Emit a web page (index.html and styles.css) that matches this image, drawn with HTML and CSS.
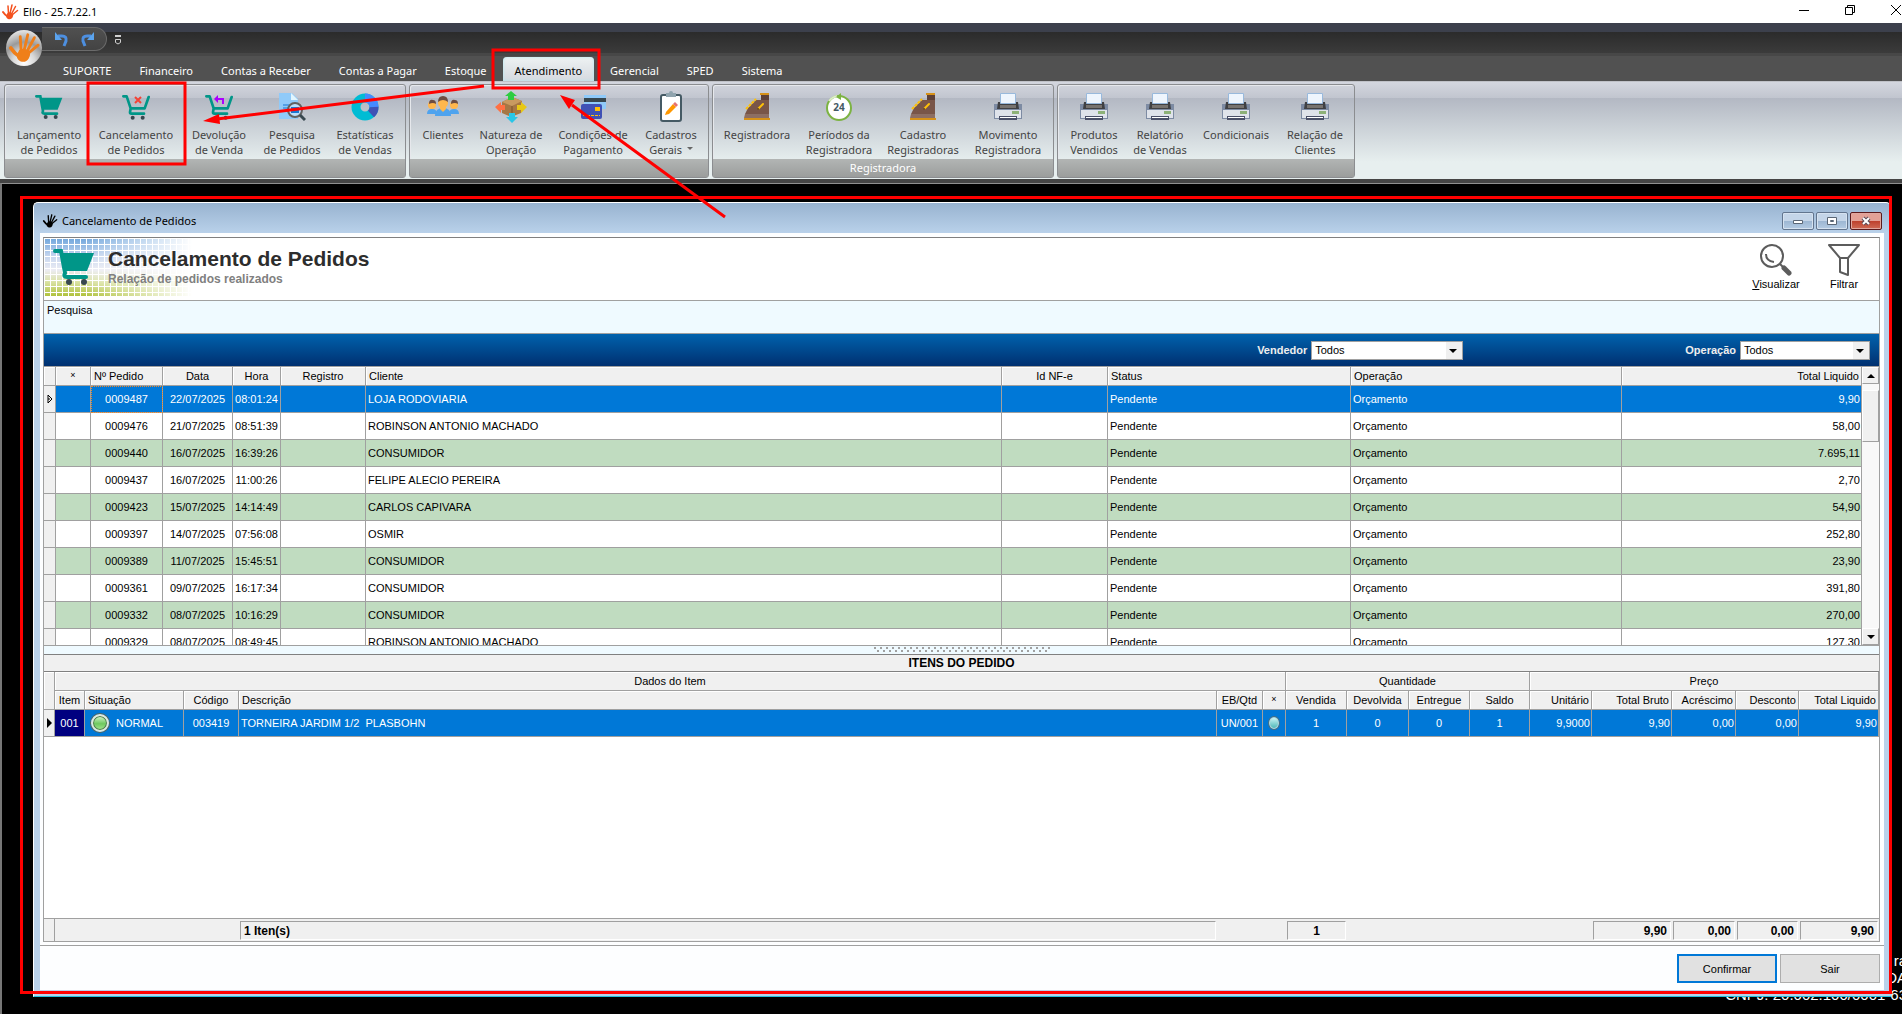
FILE: index.html
```html
<!DOCTYPE html>
<html lang="pt-BR">
<head>
    <meta charset="UTF-8">
    <meta name="viewport" content="width=device-width, initial-scale=1.0">
    <title>Ello - 25.7.22.1</title>
    <link rel="stylesheet" href="styles.css">
</head>
<body>
    <!-- icons -->
    <svg class="defs" aria-hidden="true">
        <symbol id="hand" viewBox="0 0 36 36">
            <g fill="none" stroke="currentColor" stroke-linecap="round">
                <path d="M15 21L14 6" stroke-width="3"/>
                <path d="M18 21L22 4" stroke-width="3"/>
                <path d="M21 22L29 7" stroke-width="3"/>
                <path d="M22 24L33 15" stroke-width="3"/>
                <path d="M13 27Q8 24 4 18" stroke-width="4"/>
            </g>
            <path d="M13 20Q18 17 23 21Q26 24 23 29Q20 34 14 32Q9 29 11 24Z" fill="currentColor"/>
        </symbol>
        <symbol id="cart" viewBox="0 0 42 38">
            <path d="M2 3h6l4 22q-2 4 2 4h19" fill="none" stroke="#009688" stroke-width="4" stroke-linecap="round"/>
            <path d="M8 5h33l-7 18H12z" fill="#009688"/>
            <circle cx="16" cy="34" r="3" fill="#37474f"/><circle cx="31" cy="34" r="3" fill="#37474f"/>
        </symbol>
        <symbol id="cart-open" viewBox="0 0 42 38">
            <path d="M2 3h5l6 18h21l6-17M13 21l-1 6q0 2 2 2h19" fill="none" stroke="#009688" stroke-width="4" stroke-linecap="round" stroke-linejoin="round"/>
            <circle cx="16" cy="35" r="3" fill="#37474f"/><circle cx="31" cy="35" r="3" fill="#37474f"/>
        </symbol>
        <symbol id="register" viewBox="0 0 28 28">
            <path d="M2 21L5 15 13 7h5V1h8v21z" fill="#795548"/>
            <path d="M18 2h8v5h-8z" fill="#5d4037"/>
            <path d="M17 0h9v2h-9zM1 25h26v2H1z" fill="#d69118"/>
            <path d="M2 21h24v4H1z" fill="#8d6e63"/>
            <path d="M3 16L13 6" stroke="#ffc107" stroke-width="2" stroke-dasharray="3 1"/>
            <path d="M15 16l5-5" stroke="#ffc107" stroke-width="2" stroke-linecap="round"/>
            <circle cx="15" cy="16" r="1" fill="#4e342e"/>
        </symbol>
        <symbol id="printer" viewBox="0 0 28 28">
            <path d="M0 11h28v15H0z" fill="#7d8ba3"/>
            <path d="M1 17h26v8H1z" fill="#dfe3ea"/>
            <path d="M4 9h20l1 7H3z" fill="#3f4043"/>
            <path d="M6 12h16v3H6z" fill="#77736f"/>
            <path d="M6.500 .5h15v10h-15z" fill="#eef5fd" stroke="#98b9dc"/>
            <path d="M18 18h7v3h-7z" fill="#8db177"/>
            <path d="M5 23h18v4H5z" fill="#4a5068"/><path d="M6 24h16v1H6z" fill="#fff"/>
        </symbol>
    </svg>

    <header class="titlebar">
        <svg class="app-icon"><use href="#hand"/></svg>
        <span class="app-name">Ello - 25.7.22.1</span>
        <div class="sys-buttons">
            <button aria-label="Minimizar"><svg viewBox="0 0 12 12"><path d="M1 6.500h10"/></svg></button>
            <button aria-label="Restaurar"><svg viewBox="0 0 12 12"><path d="M1.500 3.500h7v7h-7zM3.500 3v-1.500h7v7H9"/></svg></button>
            <button aria-label="Fechar"><svg viewBox="0 0 12 12"><path d="M1 1l10 10M11 1L1 11"/></svg></button>
        </div>
    </header>

    <div class="quickbar">
        <button class="orb" aria-label="Menu"><svg><use href="#hand"/></svg></button>
        <div class="quick-tools">
            <button aria-label="Desfazer"><svg viewBox="0 0 14 16"><path d="M3 5h4q5 0 4 5l-2 5" fill="none" stroke="#4d8fe0" stroke-width="3"/><path d="M0 1v8h7z" fill="#5ba4ee"/></svg></button>
            <button aria-label="Refazer"><svg viewBox="0 0 14 16"><path d="M11 5H7q-5 0-4 5l2 5" fill="none" stroke="#4d8fe0" stroke-width="3"/><path d="M14 1v8H7z" fill="#5ba4ee"/></svg></button>
        </div>
        <button class="quick-more" aria-label="Personalizar"><svg viewBox="0 0 6 10"><path d="M0 1h6" stroke="#d0d0d0" stroke-width="2"/><path d="M.5 4.500h5v3L3 9 .5 7.500z" fill="none" stroke="#d0d0d0"/></svg></button>
    </div>

    <nav class="tabs">
        <a href="#">SUPORTE</a>
        <a href="#">Financeiro</a>
        <a href="#">Contas a Receber</a>
        <a href="#">Contas a Pagar</a>
        <a href="#">Estoque</a>
        <a href="#" class="active">Atendimento</a>
        <a href="#">Gerencial</a>
        <a href="#">SPED</a>
        <a href="#">Sistema</a>
    </nav>

    <section class="ribbon">
        <div class="group group-pedidos">
            <div class="group-buttons">
                <button><svg><use href="#cart"/></svg>Lançamento<br>de Pedidos</button>
                <button><svg viewBox="0 0 28 28"><use href="#cart-open" y="1" width="28" height="26"/><path d="M13 4l6 6M19 4l-6 6" stroke="#f44336" stroke-width="2"/></svg>Cancelamento<br>de Pedidos</button>
                <button><svg viewBox="0 0 28 28"><use href="#cart-open" y="1" width="28" height="26"/><path d="M18 11V6h-6" fill="none" stroke="#aa00ff" stroke-width="2"/><path d="M13 2v8L9 6z" fill="#aa00ff"/></svg>Devolução<br>de Venda</button>
                <button><svg viewBox="0 0 28 28"><path d="M1 0h13l6 6v20H1z" fill="#90caf9"/><path d="M13 0v7h7z" fill="#e1f5fe"/><path d="M5 12h6M5 15h5M5 18h6" stroke="#1976d2"/><circle cx="17" cy="17" r="7" fill="#bbdefb" stroke="#616161" stroke-width="2"/><path d="M13 14h8v6h-8z" fill="#1976d2"/><path d="M22 22l5 5" stroke="#37474f" stroke-width="3"/></svg>Pesquisa<br>de Pedidos</button>
                <button><svg viewBox="0 0 28 28"><circle cx="14" cy="14" r="9" fill="none" stroke="#00bcd4" stroke-width="9"/><path d="M14 5a9 9 0 0 1 9 9" fill="none" stroke="#448aff" stroke-width="9"/><path d="M23 14a9 9 0 0 1-3 7" fill="none" stroke="#3f51b5" stroke-width="9"/></svg>Estatísticas<br>de Vendas</button>
            </div>
            <div class="group-name"></div>
        </div>
        <div class="group group-cadastros">
            <div class="group-buttons">
                <button><svg class="wide" viewBox="0 0 32 28"><g fill="#4fa3ee"><path d="M0 21q0-5 5-5t5 5zM22 21q0-5 5-5t5 5z"/><path d="M8 23q0-8 8-8t8 8z"/></g><g fill="#ffb74d"><circle cx="5" cy="12" r="4"/><circle cx="27" cy="12" r="4"/><circle cx="16" cy="10" r="5"/><path d="M13 14h6v2l-3 3-3-3z"/></g><path d="M2 11q0-5 4-4 3 0 3 4-3-2-7 0zM24 11q0-5 4-4 3 0 3 4-3-2-7 0zM11 9q0-6 5-6t5 6q-5-4-10 0z" fill="#6d4c41"/></svg>Clientes</button>
                <button><svg class="wide" viewBox="0 0 32 32"><path d="M7 11l10-5 10 4-1 12-10 4-9-4z" fill="#a67745"/><path d="M7 11l10 4 10-5-10-4z" fill="#c99a60"/><path d="M17 15v11" stroke="#7a532b"/><path d="M16 0l6 5h-3v4h-6V5h-3z" fill="#2ecc40"/><path d="M17 32l6-6h-3v-4h-6v4h-3z" fill="#29c6e8"/><path d="M0 16l6-5v3h4v5H6v3z" fill="#ff7043"/><path d="M32 16l-6-5v3h-4v5h4v3z" fill="#e8c814"/></svg>Natureza de<br>Operação</button>
                <button><svg viewBox="0 0 28 28"><path d="M5 2h22v14H5z" fill="#90caf9"/><path d="M5 5h22v4H5z" fill="#37474f"/><rect x="2" y="11" width="21" height="15" rx="2" fill="#3f51b5"/><path d="M16 14h5v4h-5z" fill="#ffc107"/><path d="M4 22.500h17" stroke="#ffc107" stroke-dasharray="3 1"/></svg>Condições de<br>Pagamento</button>
                <button><svg viewBox="0 0 28 32"><rect x="4" y="4" width="20" height="26" rx="2" fill="#fff" stroke="#455a64" stroke-width="2"/><path d="M9 2h10v4H9z" fill="#90a4ae"/><circle cx="14" cy="2" r="2" fill="#90a4ae"/><path d="M9 21l7-8 3 3-7 7-4 1z" fill="#ff9800"/><path d="M16 13l2-2 3 3-2 2z" fill="#e57373"/></svg>Cadastros<br>Gerais <i class="caret"></i></button>
            </div>
            <div class="group-name"></div>
        </div>
        <div class="group group-registradora">
            <div class="group-buttons">
                <button><svg><use href="#register"/></svg>Registradora</button>
                <button><svg viewBox="0 0 28 28"><circle cx="14" cy="15" r="12" fill="#fff" stroke="#7cb342" stroke-width="2"/><path d="M4 8q3-4 8-5" fill="none" stroke="#dcedc8" stroke-width="2"/><path d="M16 0v7l-5-3z" fill="#7cb342"/><text x="14" y="18" class="clock-text">24</text></svg>Períodos da<br>Registradora</button>
                <button><svg><use href="#register"/></svg>Cadastro<br>Registradoras</button>
                <button><svg><use href="#printer"/></svg>Movimento<br>Registradora</button>
            </div>
            <div class="group-name">Registradora</div>
        </div>
        <div class="group group-relatorios">
            <div class="group-buttons">
                <button><svg><use href="#printer"/></svg>Produtos<br>Vendidos</button>
                <button><svg><use href="#printer"/></svg>Relatório<br>de Vendas</button>
                <button><svg><use href="#printer"/></svg>Condicionais</button>
                <button><svg><use href="#printer"/></svg>Relação de<br>Clientes</button>
            </div>
            <div class="group-name"></div>
        </div>
    </section>

    <main class="workspace">
        <div class="license">ra<br>DA<br>CNPJ: 20.002.100/0001-63</div>

        <section class="window">
            <div class="window-title">
                <svg><use href="#hand"/></svg>
                <span>Cancelamento de Pedidos</span>
                <div class="window-buttons">
                    <button aria-label="Minimizar"><svg viewBox="0 0 12 10"><path d="M1.500 4.500h9v3h-9z" fill="#fff" stroke="#5a6675"/></svg></button>
                    <button aria-label="Maximizar"><svg viewBox="0 0 12 10"><path d="M1.500 1.500h9v7h-9zM4.500 4.500h3v1h-3z" fill="#fff" stroke="#5a6675"/></svg></button>
                    <button class="close" aria-label="Fechar"><svg viewBox="0 0 12 10"><path d="M3 2l6 6M9 2L3 8" stroke="#5a4a55" stroke-width="4"/><path d="M3 2l6 6M9 2L3 8" stroke="#fff" stroke-width="2"/></svg></button>
                </div>
            </div>

            <div class="window-body">
                <div class="panel">
                    <div class="heading">
                        <div class="heading-icon"><svg><use href="#cart"/></svg></div>
                        <div class="heading-text">
                            <h1>Cancelamento de Pedidos</h1>
                            <p>Relação de pedidos realizados</p>
                        </div>
                        <div class="tools">
                            <button><svg viewBox="0 0 32 32" fill="none" stroke="#5c5c5c"><circle cx="12" cy="12" r="11" stroke-width="2"/><path d="M6 10q0 7 8 8" stroke-width="2"/><path d="M20 20l3 3" stroke-width="2"/><path d="M24 24l5 5" stroke-width="5" stroke-linecap="round"/></svg><span><u>V</u>isualizar</span></button>
                            <button><svg viewBox="0 0 32 32" fill="none" stroke="#5c5c5c" stroke-width="2"><path d="M1 1h30L20 14v17l-8-3V14zM12 14h8" stroke-linejoin="round"/></svg><span>Filtrar</span></button>
                        </div>
                    </div>

                    <div class="search">
                        <label for="pesquisa">Pesquisa</label>
                        <input type="text" id="pesquisa">
                    </div>

                    <div class="filters">
                        <div class="field">
                            <label for="vendedor">Vendedor</label>
                            <div class="combo combo-wide"><select id="vendedor"><option>Todos</option></select></div>
                        </div>
                        <div class="field">
                            <label for="operacao">Operação</label>
                            <div class="combo"><select id="operacao"><option>Todos</option></select></div>
                        </div>
                    </div>

                    <div class="orders">
                        <div class="orders-view">
                            <table class="grid">
                                <colgroup>
                                    <col class="w12"><col class="w35"><col class="w72"><col class="w70"><col class="w48"><col class="w85"><col><col class="w106"><col class="w243"><col class="w271"><col class="w240">
                                </colgroup>
                                <thead>
                                    <tr><th></th><th class="center tiny">×</th><th>Nº Pedido</th><th class="center">Data</th><th class="center">Hora</th><th class="center">Registro</th><th>Cliente</th><th class="center">Id NF-e</th><th>Status</th><th>Operação</th><th class="right">Total Liquido</th></tr>
                                </thead>
                                <tbody>
                                    <tr class="selected"><td class="mark"><svg viewBox="0 0 6 10"><path d="M1 1l4 4-4 4zM1 5h2" fill="none" stroke="#000"/></svg></td><td></td><td class="center focus">0009487</td><td class="center">22/07/2025</td><td class="center">08:01:24</td><td></td><td>LOJA RODOVIARIA</td><td></td><td>Pendente</td><td>Orçamento</td><td class="right">9,90</td></tr>
                                    <tr><td class="mark"></td><td></td><td class="center">0009476</td><td class="center">21/07/2025</td><td class="center">08:51:39</td><td></td><td>ROBINSON ANTONIO MACHADO</td><td></td><td>Pendente</td><td>Orçamento</td><td class="right">58,00</td></tr>
                                    <tr><td class="mark"></td><td></td><td class="center">0009440</td><td class="center">16/07/2025</td><td class="center">16:39:26</td><td></td><td>CONSUMIDOR</td><td></td><td>Pendente</td><td>Orçamento</td><td class="right">7.695,11</td></tr>
                                    <tr><td class="mark"></td><td></td><td class="center">0009437</td><td class="center">16/07/2025</td><td class="center">11:00:26</td><td></td><td>FELIPE ALECIO PEREIRA</td><td></td><td>Pendente</td><td>Orçamento</td><td class="right">2,70</td></tr>
                                    <tr><td class="mark"></td><td></td><td class="center">0009423</td><td class="center">15/07/2025</td><td class="center">14:14:49</td><td></td><td>CARLOS CAPIVARA</td><td></td><td>Pendente</td><td>Orçamento</td><td class="right">54,90</td></tr>
                                    <tr><td class="mark"></td><td></td><td class="center">0009397</td><td class="center">14/07/2025</td><td class="center">07:56:08</td><td></td><td>OSMIR</td><td></td><td>Pendente</td><td>Orçamento</td><td class="right">252,80</td></tr>
                                    <tr><td class="mark"></td><td></td><td class="center">0009389</td><td class="center">11/07/2025</td><td class="center">15:45:51</td><td></td><td>CONSUMIDOR</td><td></td><td>Pendente</td><td>Orçamento</td><td class="right">23,90</td></tr>
                                    <tr><td class="mark"></td><td></td><td class="center">0009361</td><td class="center">09/07/2025</td><td class="center">16:17:34</td><td></td><td>CONSUMIDOR</td><td></td><td>Pendente</td><td>Orçamento</td><td class="right">391,80</td></tr>
                                    <tr><td class="mark"></td><td></td><td class="center">0009332</td><td class="center">08/07/2025</td><td class="center">10:16:29</td><td></td><td>CONSUMIDOR</td><td></td><td>Pendente</td><td>Orçamento</td><td class="right">270,00</td></tr>
                                    <tr><td class="mark"></td><td></td><td class="center">0009329</td><td class="center">08/07/2025</td><td class="center">08:49:45</td><td></td><td>ROBINSON ANTONIO MACHADO</td><td></td><td>Pendente</td><td>Orçamento</td><td class="right">127,30</td></tr>
                                </tbody>
                            </table>
                        </div>
                        <div class="scrollbar">
                            <button class="up" aria-label="Subir"></button>
                            <div class="thumb"></div>
                            <button class="down" aria-label="Descer"></button>
                        </div>
                    </div>

                    <div class="splitter"><span></span></div>
                    <h2>ITENS DO PEDIDO</h2>

                    <div class="items">
                        <table class="grid items-grid">
                            <colgroup>
                                <col class="w11"><col class="w30"><col class="w99"><col class="w55"><col><col class="w46"><col class="w23"><col class="w61"><col class="w62"><col class="w61"><col class="w60"><col class="w62"><col class="w80"><col class="w64"><col class="w63"><col class="w80">
                            </colgroup>
                            <thead>
                                <tr class="bands"><th rowspan="2"></th><th colspan="6">Dados do Item</th><th colspan="4">Quantidade</th><th colspan="5">Preço</th></tr>
                                <tr><th class="center">Item</th><th>Situação</th><th class="center">Código</th><th>Descrição</th><th class="center">EB/Qtd</th><th class="center tiny">×</th><th class="center">Vendida</th><th class="center">Devolvida</th><th class="center">Entregue</th><th class="center">Saldo</th><th class="right">Unitário</th><th class="right">Total Bruto</th><th class="right">Acréscimo</th><th class="right">Desconto</th><th class="right">Total Liquido</th></tr>
                            </thead>
                            <tbody>
                                <tr class="selected"><td class="mark"><svg viewBox="0 0 6 10"><path d="M1 0l5 5-5 5z"/></svg></td><td class="center current">001</td><td><div class="situation"><i class="ball"></i>NORMAL</div></td><td class="center">003419</td><td>TORNEIRA JARDIM 1/2&nbsp; PLASBOHN</td><td class="center">UN/001</td><td><i class="ball teal"></i></td><td class="center">1</td><td class="center">0</td><td class="center">0</td><td class="center">1</td><td class="right">9,9000</td><td class="right">9,90</td><td class="right">0,00</td><td class="right">0,00</td><td class="right">9,90</td></tr>
                            </tbody>
                        </table>
                        <table class="totals">
                            <colgroup>
                                <col class="w11"><col class="w184"><col><col class="w69"><col class="w61"><col class="w245"><col class="w80"><col class="w64"><col class="w63"><col class="w80">
                            </colgroup>
                            <tbody>
                                <tr><td class="first"></td><td></td><td><div>1 Iten(s)</div></td><td></td><td><div class="center">1</div></td><td></td><td><div class="right">9,90</div></td><td><div class="right">0,00</div></td><td><div class="right">0,00</div></td><td><div class="right">9,90</div></td></tr>
                            </tbody>
                        </table>
                    </div>
                </div>

                <div class="actions">
                    <button class="default">Confirmar</button>
                    <button>Sair</button>
                </div>
            </div>
        </section>

        <div class="frame"></div>
    </main>

    <!-- callouts drawn over the ribbon -->
    <svg class="callouts" aria-hidden="true">
        <g fill="none" stroke="#ff0000" stroke-width="3">
            <rect x="88" y="83" width="97" height="81"/>
            <rect x="493" y="50" width="106" height="38"/>
            <path d="M484 86L217 119M725 217L572 105"/>
        </g>
        <path d="M203 121l16-7 1 10zM560 95l15 5-6 9z" fill="#ff0000"/>
    </svg>
</body>
</html>
```
FILE: styles.css
```css
* {
    box-sizing: border-box;
}

body {
    margin: 0;
    display: flex;
    flex-direction: column;
    height: 100vh;
    overflow: hidden;
    background: #454545;
    color: #000;
    font-family: "Liberation Sans", Arial, sans-serif;
    font-size: 11px;
    position: relative;
}

button {
    font: inherit;
    color: inherit;
    background: none;
    border: none;
    padding: 0;
    margin: 0;
}

.defs {
    position: absolute;
    width: 0;
    height: 0;
}

.center {
    text-align: center;
}

.right {
    text-align: right;
}

/* main window */
.titlebar {
    flex: none;
    display: flex;
    align-items: center;
    height: 23px;
    background: #fff;
    font-family: "Noto Sans", sans-serif;
    font-size: 11px;
}

.app-icon {
    width: 18px;
    height: 18px;
    margin: 0 4px 0 1px;
    color: #f4511e;
}

.sys-buttons {
    display: flex;
    gap: 34px;
    margin-left: auto;
}

.sys-buttons button {
    width: 12px;
    height: 20px;
}

.sys-buttons svg {
    width: 12px;
    height: 12px;
    fill: none;
    stroke: #000;
}

.quickbar {
    flex: none;
    display: flex;
    align-items: flex-start;
    height: 33px;
    padding-left: 6px;
    background: linear-gradient(#3c404c 9px, #2b2b2b 9px, #3b3b3b 30px, #474747 30px);
}

.orb {
    width: 36px;
    height: 36px;
    margin-top: 7px;
    border-radius: 50%;
    background: radial-gradient(circle at 50% 90%, #fff, #d8d8d8 30%, #9a9a9a 55%, #eee 90%);
    color: #ef7f1a;
    z-index: 1;
}

.orb svg {
    display: block;
    width: 34px;
    height: 34px;
    margin: 0 auto;
}

.quick-tools {
    display: flex;
    align-items: center;
    gap: 11px;
    height: 24px;
    margin-top: 4px;
    padding: 0 12px 0 13px;
    border: 1px solid #6b6b6b;
    border-left: none;
    border-radius: 0 12px 12px 0;
    background: linear-gradient(#505050, #434343);
}

.quick-tools svg {
    display: block;
    width: 14px;
    height: 16px;
}

.quick-more {
    margin: 12px 0 0 8px;
}

.quick-more svg {
    display: block;
    width: 6px;
    height: 10px;
}

.tabs {
    flex: none;
    display: flex;
    gap: 4px;
    height: 25px;
    padding-left: 51px;
    background: #515151;
    font-family: "Noto Sans", sans-serif;
    font-size: 11px;
    line-height: 30px;
}

.tabs a {
    padding: 0 12px;
    color: #fff;
    text-decoration: none;
}

.tabs .active {
    margin-top: 1px;
    line-height: 28px;
    color: #000;
    border-radius: 4px 4px 0 0;
    background: linear-gradient(#eef2f3, #d5d9df);
    box-shadow: inset 0 0 3px #aeeef5;
}

.ribbon {
    flex: none;
    display: flex;
    gap: 3px;
    height: 98px;
    margin-bottom: 4px;
    padding: 2px 4px 1px;
    border-top: 1px solid #c0c2c8;
    background: linear-gradient(#d4d7df, #c1c5cf 16px, #b3b8c3 16px, #e7efef 80px);
    font-family: "Noto Sans", sans-serif;
    font-size: 11px;
    line-height: 15px;
    color: #444;
}

.group {
    display: flex;
    flex-direction: column;
    height: 94px;
    border: 1px solid #8b8d90;
    border-radius: 3px;
    box-shadow: inset 1px 1px 0 #e6e8ec;
}

.group-buttons {
    flex: 1;
    display: grid;
    padding: 0 3px;
}

.group-pedidos .group-buttons {
    grid-template-columns: 82px 92px 74px 72px 74px;
}

.group-cadastros .group-buttons {
    grid-template-columns: 60px 76px 88px 68px;
}

.group-registradora .group-buttons {
    grid-template-columns: 82px 82px 86px 84px;
}

.group-relatorios .group-buttons {
    grid-template-columns: 66px 66px 86px 72px;
}

.group button {
    display: block;
    padding-top: 6px;
    text-align: center;
    white-space: nowrap;
    align-self: start;
}

.group svg {
    display: block;
    width: 28px;
    height: 32px;
    margin: 0 auto 4px;
}

.group svg.wide {
    width: 32px;
}

.clock-text {
    font-size: 10px;
    font-weight: bold;
    fill: #455a64;
    text-anchor: middle;
}

.caret {
    display: inline-block;
    margin: 0 0 4px 2px;
    border: 3px solid transparent;
    border-top-color: #666;
    border-bottom: none;
}

.group-name {
    height: 18px;
    line-height: 17px;
    text-align: center;
    color: #fff;
    background: linear-gradient(#b2b5b4, #9b9d9c);
}

/* mdi area */
.workspace {
    flex: 1;
    min-height: 0;
    display: flex;
    position: relative;
    overflow: hidden;
    padding: 18px 11px 17px 31px;
    border-top: 1px solid #909090;
    border-left: 2px solid #777;
    background: #000;
}

.license {
    position: absolute;
    right: -5px;
    bottom: 11px;
    font-size: 15px;
    line-height: 17px;
    text-align: right;
    color: #fff;
}

.frame {
    position: absolute;
    top: 12px;
    right: 10px;
    bottom: 20px;
    left: 18px;
    border: 3px solid #ff0000;
    pointer-events: none;
}

.window {
    flex: 1;
    min-width: 0;
    display: flex;
    flex-direction: column;
    position: relative;
    padding: 0 7px 6px 6px;
    border: 1px solid #fff;
    border-right: none;
    border-bottom-color: #22c0dc;
    border-radius: 5px 5px 0 0;
    background: linear-gradient(#98b3d0, #b9d1ea 30px);
}

.window-title {
    flex: none;
    display: flex;
    align-items: center;
    height: 30px;
    padding: 5px 2px 0 2px;
    font-family: "Noto Sans", sans-serif;
    font-size: 11px;
}

.window-title > svg {
    width: 16px;
    height: 16px;
    margin-right: 4px;
}

.window-buttons {
    display: flex;
    gap: 2px;
    margin-left: auto;
}

.window-buttons button {
    width: 32px;
    height: 18px;
    border: 1px solid #62758e;
    border-radius: 2px;
    background: linear-gradient(#c4d5e8 50%, #9cb6d2 50%, #b4cbe3);
    box-shadow: inset 0 0 0 1px #d5e2f0;
}

.window-buttons svg {
    display: block;
    width: 12px;
    height: 10px;
    margin: 0 auto;
}

.window-buttons .close {
    border-color: #5c1a1c;
    background: linear-gradient(#e3a196 50%, #bd3f2c 50%, #cf6b56);
    box-shadow: inset 0 0 0 1px #e0a79e;
}

.window-body {
    flex: 1;
    min-height: 0;
    display: flex;
    flex-direction: column;
    background: #fdfeff;
}

.panel {
    flex: 1;
    min-height: 0;
    display: flex;
    flex-direction: column;
    margin: 4px 4px 3px 3px;
    border: 1px solid #a0a0a0;
    border-top-color: #808080;
    background: #fff;
}

.heading {
    flex: none;
    display: flex;
    height: 63px;
    border-bottom: 1px solid #a0a0a0;
}

/* dotted corner: white lines over a blue to green fade */
.heading-icon {
    width: 148px;
    height: 58px;
    margin-right: -84px;
    padding: 10px 0 0 9px;
    background:
        linear-gradient(90deg, transparent 40px, #fff),
        repeating-linear-gradient(90deg, #fff 0 1px, transparent 1px 6px),
        repeating-linear-gradient(#fff 0 1px, transparent 1px 6px),
        linear-gradient(#6fa6dc, #c3d4ee 30%, #ececf4 55%, #dbe3a8 75%, #b0c23c);
}

.heading-icon svg {
    width: 42px;
    height: 38px;
}

.heading-text {
    padding-top: 9px;
}

.heading h1 {
    margin: 0;
    font-size: 21px;
    line-height: 24px;
    color: #2d2d2d;
}

.heading p {
    margin: 0;
    font-size: 12px;
    font-weight: bold;
    line-height: 17px;
    color: #808080;
}

.tools {
    display: flex;
    gap: 12px;
    margin-left: auto;
    padding: 6px 7px 0 0;
}

.tools button {
    width: 56px;
    text-align: center;
    align-self: flex-start;
}

.tools svg {
    display: block;
    width: 32px;
    height: 32px;
    margin: 0 auto 1px;
}

.tools span {
    display: block;
    line-height: 14px;
}

.search {
    flex: none;
    display: flex;
    height: 33px;
    padding: 2px 3px;
    border-bottom: 1px solid #a0a0a0;
    background: #effaff;
}

.search label {
    line-height: 14px;
}

.search input {
    flex: 1;
    border: none;
    outline: none;
    background: none;
}

.filters {
    flex: none;
    display: flex;
    justify-content: flex-end;
    align-items: center;
    gap: 222px;
    height: 33px;
    padding-right: 9px;
    border-bottom: 1px solid #a0a0a0;
    background: linear-gradient(#0062ad, #003070);
}

.field {
    display: flex;
    align-items: center;
    gap: 4px;
}

.field label {
    font-weight: bold;
    color: #eee;
}

.combo {
    position: relative;
    width: 130px;
    height: 19px;
}

.combo-wide {
    width: 152px;
}

.combo select {
    appearance: none;
    width: 100%;
    height: 19px;
    padding: 0 3px;
    border: 1px solid #a0a0a0;
    border-radius: 0;
    background: linear-gradient(#f0f0f0, #f0f0f0) right / 16px 100% no-repeat #fff;
    color: #000;
    font: inherit;
}

.combo::after {
    content: "";
    position: absolute;
    top: 8px;
    right: 6px;
    border: 4px solid transparent;
    border-top-color: #000;
    border-bottom: none;
    pointer-events: none;
}

/* data grids */
.orders {
    flex: none;
    display: flex;
    height: 279px;
    border-bottom: 1px solid #a0a0a0;
}

.orders-view {
    flex: 1;
    min-width: 0;
    overflow: hidden;
}

.grid,
.totals {
    width: 100%;
    table-layout: fixed;
    border-collapse: separate;
    border-spacing: 0;
}

.grid th {
    height: 19px;
    padding: 0 3px;
    border-right: 1px solid #a0a0a0;
    border-bottom: 1px solid #a0a0a0;
    background: #f0f0f0;
    box-shadow: inset 1px 1px 0 #fff;
    font-weight: normal;
    text-align: left;
    white-space: nowrap;
}

.grid th.center,
.grid .bands th {
    text-align: center;
}

.grid th.right {
    padding-right: 2px;
    text-align: right;
}

.grid th.tiny {
    font-size: 9px;
    line-height: 9px;
    padding-bottom: 2px;
}

.grid td {
    height: 27px;
    padding: 0 2px;
    border-right: 1px solid #a0a0a0;
    border-bottom: 1px solid #a0a0a0;
    white-space: nowrap;
}

.grid td.right {
    padding-right: 1px;
}

.orders .grid tbody tr:nth-child(odd) td {
    background: #c0dcc0;
}

.grid tbody tr.selected td,
.orders .grid tbody tr.selected td {
    background: #0078d7;
    color: #fff;
}

.grid tbody tr td.mark,
.orders .grid tbody tr td.mark {
    padding: 0;
    background: #f0f0f0;
    text-align: center;
}

.mark svg {
    display: block;
    width: 6px;
    height: 10px;
    margin: 0 auto;
}

.focus {
    outline: 1px dotted #f08828;
    outline-offset: -1px;
}

.w11 { width: 11px; }
.w12 { width: 12px; }
.w23 { width: 23px; }
.w30 { width: 30px; }
.w35 { width: 35px; }
.w46 { width: 46px; }
.w48 { width: 48px; }
.w55 { width: 55px; }
.w60 { width: 60px; }
.w61 { width: 61px; }
.w62 { width: 62px; }
.w63 { width: 63px; }
.w64 { width: 64px; }
.w69 { width: 69px; }
.w70 { width: 70px; }
.w72 { width: 72px; }
.w80 { width: 80px; }
.w85 { width: 85px; }
.w99 { width: 99px; }
.w106 { width: 106px; }
.w184 { width: 184px; }
.w240 { width: 240px; }
.w243 { width: 243px; }
.w245 { width: 245px; }
.w271 { width: 271px; }

.scrollbar {
    display: flex;
    flex-direction: column;
    width: 17px;
    background: #f8f8f8;
}

.scrollbar button,
.thumb {
    flex: none;
    height: 17px;
    border: 1px solid #a0a0a0;
    border-top-color: #fff;
    border-left-color: #fff;
    background: #f0f0f0;
}

.scrollbar .thumb {
    height: 52px;
    margin: 6px 0 auto;
}

.up::after,
.down::after {
    content: "";
    display: block;
    width: 0;
    margin: 0 auto;
    border: 4px solid transparent;
}

.up::after {
    border-top: none;
    border-bottom-color: #000;
}

.down::after {
    border-bottom: none;
    border-top-color: #000;
}

.splitter {
    flex: none;
    height: 9px;
    padding-top: 1px;
    border-bottom: 1px solid #808080;
    background: #effaff;
}

.splitter span {
    display: block;
    width: 176px;
    height: 5px;
    margin: 0 auto;
    background:
        linear-gradient(90deg, #a0a0a0 2px, transparent 2px) 0 0 / 6px 2px repeat-x,
        linear-gradient(90deg, #a0a0a0 2px, transparent 2px) 3px 3px / 6px 2px repeat-x;
}

.panel h2 {
    flex: none;
    height: 17px;
    margin: 0;
    border-bottom: 1px solid #808080;
    background: #f0f0f0;
    font-size: 12px;
    line-height: 16px;
    text-align: center;
}

.items {
    flex: 1;
    display: flex;
    flex-direction: column;
    justify-content: space-between;
}

.items-grid tbody tr.selected td.current {
    background: #000080;
}

.situation {
    display: flex;
    align-items: center;
    gap: 7px;
    padding-left: 4px;
}

.ball {
    display: block;
    width: 18px;
    height: 18px;
    border: 2px solid #dfe8df;
    border-radius: 50%;
    box-shadow: 0 0 0 1px #55665a, inset 0 0 0 1px #4c7a4c;
    background: linear-gradient(#d9f5cf, #6fc95f 55%, #a4e68f);
}

.ball.teal {
    width: 10px;
    height: 12px;
    margin: 0 auto;
    border: 1px solid #b8d8d8;
    box-shadow: 0 0 0 1px #4a7080;
    background: linear-gradient(#c8f4f4, #4fb8b8);
}

.totals td {
    height: 23px;
    padding: 2px 1px 1px;
    border-top: 1px solid #a0a0a0;
    background: #f0f0f0;
    font-size: 12px;
    font-weight: bold;
}

.totals .first {
    border-right: 1px solid #a0a0a0;
}

.totals div {
    height: 19px;
    padding: 0 3px;
    border: 1px solid #fff;
    border-top-color: #a0a0a0;
    border-left-color: #a0a0a0;
    line-height: 18px;
}

.actions {
    flex: none;
    display: flex;
    justify-content: flex-end;
    gap: 3px;
    height: 45px;
    padding: 8px 4px 0;
    border-top: 1px solid #a0a0a0;
}

.actions button {
    width: 100px;
    height: 29px;
    border: 1px solid #adadad;
    background: #e1e1e1;
}

.actions .default {
    border: 2px solid #0078d7;
}

.callouts {
    position: absolute;
    top: 0;
    left: 0;
    width: 100%;
    height: 230px;
    z-index: 2;
    pointer-events: none;
}
```
